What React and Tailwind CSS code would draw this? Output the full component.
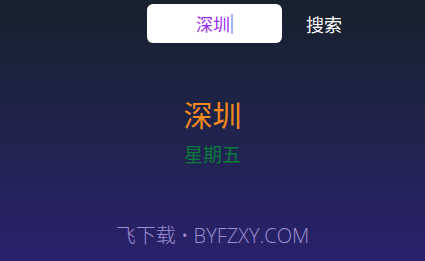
export default function App() {
  return (
    <div
      className="relative flex h-[261px] w-[425px] flex-col items-center bg-gradient-to-b from-[#17212c] to-[#2a206d]"
      style={{ fontFamily: '"Noto Sans CJK SC", "Noto Sans", sans-serif' }}
    >
      <div className="mt-[4px] flex w-full items-center pl-[147px]">
        <div className="flex h-[39px] w-[135px] items-center justify-center rounded-[6px] bg-white">
          <span className="text-[17px] leading-none text-[#9a2cf5]">深圳</span>
          <span className="ml-[1px] h-[20px] w-[2px] bg-[#9db4ff]" />
        </div>
        <span className="ml-[24px] text-[18px] leading-none text-white">搜索</span>
      </div>
      <div className="mt-[57px] text-[29px] font-normal leading-none text-[#f28a1e]">深圳</div>
      <div className="mt-[15px] text-[19px] leading-none text-[#0a7a3a]">星期五</div>
      <div
        className="mt-[63px] text-[20px] font-light leading-none text-[#9f8fd0]"
        style={{ fontFamily: '"Open Sans", "Noto Sans CJK SC", sans-serif' }}
      >
        飞下载 • BYFZXY.COM
      </div>
    </div>
  );
}
